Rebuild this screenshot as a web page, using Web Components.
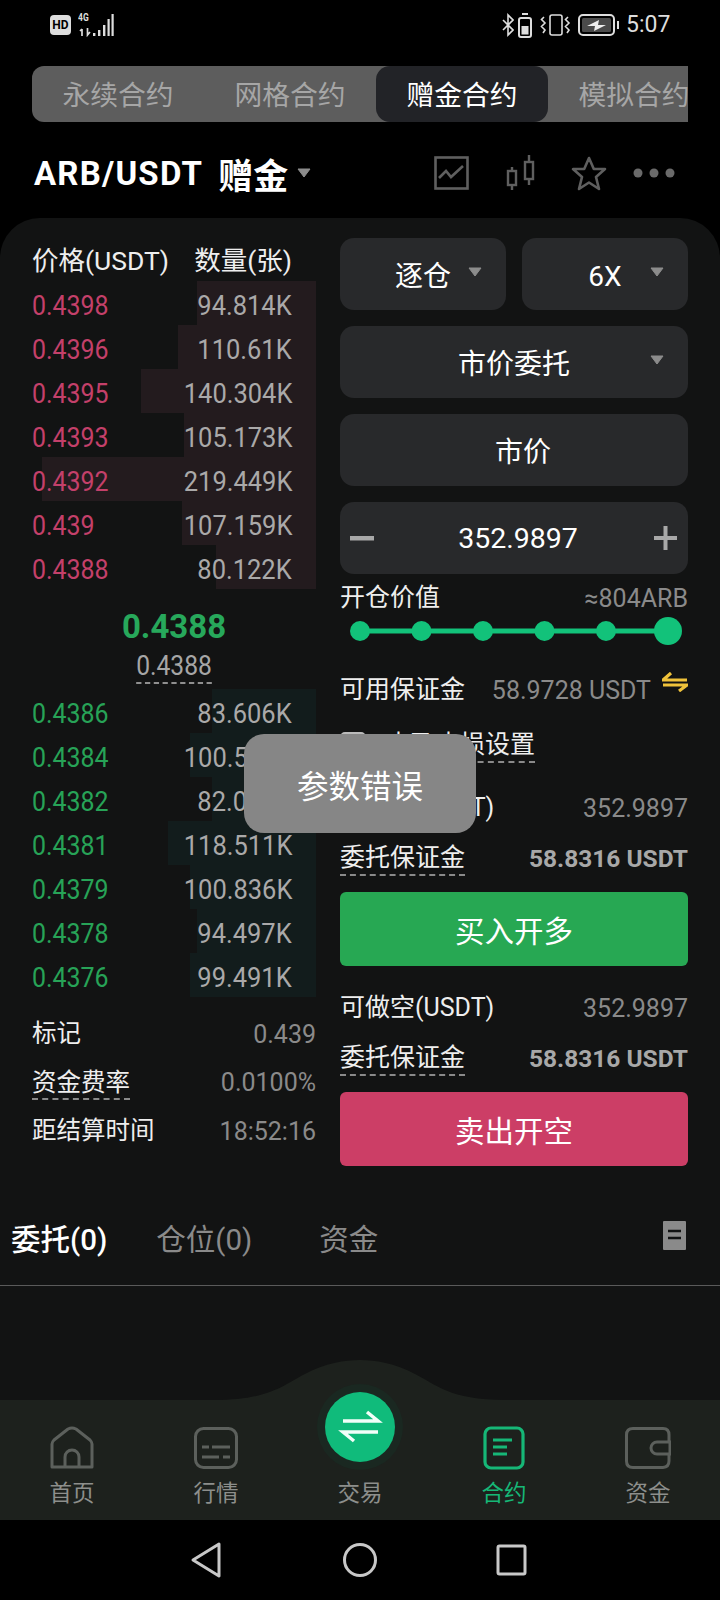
<!DOCTYPE html>
<html lang="zh">
<head>
<meta charset="utf-8">
<title>赠金合约</title>
<style>
  html, body { margin: 0; background: #000; }
  body {
    width: 720px;
    height: 1600px;
    overflow: hidden;
    color: #fff;
    font-family: Roboto, "Noto Sans CJK SC", sans-serif;
  }
  app-shell { display: flex; flex-direction: column; height: 1600px; }
  span[slot] { white-space: nowrap; }
</style>
</head>
<body>
<app-shell>
  <status-bar></status-bar>
  <segment-tabs active="2">
    <span>永续合约</span><span>网格合约</span><span>赠金合约</span><span>模拟合约</span>
  </segment-tabs>
  <pair-header>ARB/USDT</pair-header>
  <trade-panel>
    <order-book>
      <book-row side="ask" bar="119"><span slot="price">0.4398</span>94.814K</book-row>
      <book-row side="ask" bar="138"><span slot="price">0.4396</span>110.61K</book-row>
      <book-row side="ask" bar="175"><span slot="price">0.4395</span>140.304K</book-row>
      <book-row side="ask" bar="132"><span slot="price">0.4393</span>105.173K</book-row>
      <book-row side="ask" bar="274"><span slot="price">0.4392</span>219.449K</book-row>
      <book-row side="ask" bar="134"><span slot="price">0.439</span>107.159K</book-row>
      <book-row side="ask" bar="100"><span slot="price">0.4388</span>80.122K</book-row>
      <mid-price last="0.4388" mark="0.4388"></mid-price>
      <book-row side="bid" bar="104"><span slot="price">0.4386</span>83.606K</book-row>
      <book-row side="bid" bar="126"><span slot="price">0.4384</span>100.512K</book-row>
      <book-row side="bid" bar="104"><span slot="price">0.4382</span>82.056K</book-row>
      <book-row side="bid" bar="148"><span slot="price">0.4381</span>118.511K</book-row>
      <book-row side="bid" bar="126"><span slot="price">0.4379</span>100.836K</book-row>
      <book-row side="bid" bar="119"><span slot="price">0.4378</span>94.497K</book-row>
      <book-row side="bid" bar="126"><span slot="price">0.4376</span>99.491K</book-row>
      <book-stat slot="stats"><span slot="label">标记</span>0.439</book-stat>
      <book-stat slot="stats" dashed><span slot="label">资金费率</span>0.0100%</book-stat>
      <book-stat slot="stats"><span slot="label">距结算时间</span>18:52:16</book-stat>
    </order-book>
    <trade-form></trade-form>
  </trade-panel>
  <record-tabs></record-tabs>
  <div style="flex:1;background:#121313"></div>
  <bottom-nav></bottom-nav>
  <system-nav></system-nav>
</app-shell>
<toast-message>参数错误</toast-message>

<script>
const CARET = `<svg width="14" height="10" viewBox="0 0 14 10"><path d="M1 1h12L7 9z" fill="#8c8c8c" stroke="#8c8c8c" stroke-linejoin="round"/></svg>`;

class StatusBar extends HTMLElement {
    constructor() {
        super();
        this.attachShadow({ mode: 'open' });
        this.shadowRoot.innerHTML = `
          <style>
            :host { display: flex; align-items: center; justify-content: space-between; height: 50px; padding: 0 50px 10px; flex: none; color: #ddd; }
            .group { display: flex; align-items: center; }
            .hd { width: 21px; height: 20px; background: #ddd; color: #000; border-radius: 4px; font: 700 12px/20px Roboto, sans-serif; text-align: center; }
            .net { position: relative; width: 36px; height: 24px; margin-left: 7px; }
            .net span { position: absolute; left: 0; top: -1px; font: 700 10px/12px Roboto, sans-serif; transform: scaleX(.85); transform-origin: 0 0; }
            .net svg { position: absolute; left: 0; top: 0; }
            .time { font: 400 23px/26px Roboto, sans-serif; margin-left: 6px; width: 44px; white-space: nowrap; }
            svg { display: block; }
          </style>
          <div class="group">
            <span class="hd">HD</span>
            <div class="net"><span>4G</span>
              <svg width="36" height="24" viewBox="0 0 36 24" fill="#ddd">
                <path d="M4 23v-7M2 18l2-2M9.500 15v7l2.500-3" fill="none" stroke="#ddd" stroke-width="1.700"/>
                <rect x="15" y="20" width="2.400" height="3"/><rect x="20" y="17" width="2.400" height="6"/><rect x="25" y="12" width="2.400" height="11"/><rect x="29.500" y="6" width="2.200" height="17"/><rect x="33.500" y="1" width="2.200" height="22"/>
              </svg>
            </div>
          </div>
          <div class="group">
            <svg width="12" height="24" viewBox="0 0 12 24" fill="none" stroke="#ddd" stroke-width="1.6"><path d="M1 7l10 10-5 5V2l5 5L1 17"/></svg>
            <svg style="margin-left:4px" width="14" height="25" viewBox="0 0 14 25" fill="none"><path d="M4 1h6" stroke="#ddd" stroke-width="2"/><rect x="1" y="5" width="12" height="19" rx="2" stroke="#ddd" stroke-width="2"/><rect x="3.5" y="13" width="7" height="8.5" fill="#ddd"/></svg>
            <svg style="margin-left:8px" width="33" height="22" viewBox="0 0 33 22" fill="none" stroke="#ddd" stroke-width="1.6"><rect x="10" y="1" width="12" height="20" rx="2"/><path d="M4 3l-2.5 2.5L5 9 1.5 12.500 5 16l-2 3M28 3l-2.500 2.500L29 9l-3.500 3.500L29 16l-2 3"/></svg>
            <svg style="margin-left:5px" width="42" height="22" viewBox="0 0 42 22"><rect x="1" y="1" width="35" height="20" rx="4" fill="none" stroke="#ddd" stroke-width="2"/><rect x="4" y="4" width="29" height="14" rx="1.500" fill="#4a4a4a"/><path d="M9 12l12-6-1 5h8l-12 6 1-5z" fill="#eee"/><rect x="39" y="7" width="2" height="8" fill="#ddd"/></svg>
            <span class="time">5:07</span>
          </div>
        `;
    }
}

class SegmentTabs extends HTMLElement {
    connectedCallback() {
        const active = Number(this.getAttribute('active'));
        Array.from(this.children).forEach((tab, i) => {
            tab.style.cssText = 'flex:none;width:172px;height:56px;line-height:59px;text-align:center;border-radius:14px;'
                + (i === active ? 'background:#222327;color:#fff;' : 'color:#a6a6a6;');
        });
    }

    constructor() {
        super();
        this.attachShadow({ mode: 'open' });
        this.shadowRoot.innerHTML = `
          <style>
            :host { display: flex; flex: none; width: 656px; height: 56px; margin: 6px 32px 0; overflow: hidden; background: #5d5d5d; border-radius: 12px 0 0 12px; font-size: 27.750px; }
            ::slotted(*) { white-space: nowrap; }
          </style>
          <slot></slot>
        `;
    }
}

class PairHeader extends HTMLElement {
    constructor() {
        super();
        this.attachShadow({ mode: 'open' });
        this.shadowRoot.innerHTML = `
          <style>
            :host { display: flex; align-items: center; flex: none; height: 96px; padding: 6px 45px 0 34px; box-sizing: border-box; }
            .pair { font-size: 33px; font-weight: 700; letter-spacing: 1.200px; white-space: nowrap; }
            .tag { font-size: 35px; font-weight: 700; margin-left: 15px; white-space: nowrap; }
            .caret { margin-left: 9px; }
            .icons { display: flex; align-items: center; margin-left: auto; }
            svg { display: block; }
          </style>
          <span class="pair"><slot></slot></span>
          <span class="tag">赠金</span>
          <span class="caret">${CARET}</span>
          <div class="icons">
            <svg width="35" height="34" viewBox="0 0 35 34" fill="none" stroke="#5f5f5f" stroke-width="2.600"><rect x="1.500" y="1.500" width="32" height="31"/><path d="M5 22l7-7 5 6 12-11"/></svg>
            <svg style="margin-left:37px" width="30" height="36" viewBox="0 0 30 36" fill="none" stroke="#5f5f5f" stroke-width="2.400"><rect x="2" y="16" width="8" height="14"/><path d="M6 12v4M6 30v5"/><rect x="19" y="7" width="8" height="17"/><path d="M23 0v7M23 24v6"/></svg>
            <svg style="margin-left:35px" width="36" height="35" viewBox="0 0 36 35" fill="none" stroke="#5f5f5f" stroke-width="2.600" stroke-linejoin="round"><path d="M18 2l4.800 11H34l-9 8 3 12-10-6.500L8 33l3-12-9-8h11.200z"/></svg>
            <svg style="margin-left:26px" width="42" height="10" viewBox="0 0 42 10" fill="#6a6a6a"><circle cx="5" cy="5" r="4.500"/><circle cx="21" cy="5" r="4.500"/><circle cx="37" cy="5" r="4.500"/></svg>
          </div>
        `;
    }
}

class TradePanel extends HTMLElement {
    constructor() {
        super();
        this.attachShadow({ mode: 'open' });
        this.shadowRoot.innerHTML = `
          <style>
            :host { display: grid; grid-template-columns: 284px 348px; column-gap: 24px; flex: none; height: 974px; padding: 20px 32px 0 32px; box-sizing: border-box; background: #121313; border-radius: 40px 40px 0 0; }
          </style>
          <slot></slot>
        `;
    }
}

class OrderBook extends HTMLElement {
    constructor() {
        super();
        this.attachShadow({ mode: 'open' });
        this.shadowRoot.innerHTML = `
          <style>
            :host { display: block; min-width: 0; }
            .head { display: flex; justify-content: space-between; height: 40px; padding: 3px 24px 0 0; font-size: 26.500px; line-height: 40px; color: #eee; white-space: nowrap; }
            .stats { margin-top: 13px; }
          </style>
          <div class="head"><span>价格(USDT)</span><span>数量(张)</span></div>
          <slot></slot>
          <div class="stats"><slot name="stats"></slot></div>
        `;
    }
}

class BookRow extends HTMLElement {
    constructor() {
        super();
        this.attachShadow({ mode: 'open' });
        this.shadowRoot.innerHTML = `
          <style>
            :host { display: flex; align-items: center; justify-content: space-between; height: 44px; box-sizing: border-box; padding: 4px 24px 0 0; font-size: 28px; color: #aaa9a9; white-space: nowrap; }
            :host([side="ask"]) { --bar: #231b1e; --price: #c4406a; }
            :host([side="bid"]) { --bar: #121c1c; --price: #27a357; }
            span { display: inline-block; }
            .price { color: var(--price); transform: scaleX(.89); transform-origin: 0 50%; }
            .qty { transform: scaleX(.91); transform-origin: 100% 50%; }
          </style>
          <span class="price"><slot name="price"></slot></span>
          <span class="qty"><slot></slot></span>
        `;
    }

    connectedCallback() {
        const w = this.getAttribute('bar') + 'px';
        this.style.background = `linear-gradient(to left, var(--bar) ${w}, transparent ${w})`;
    }
}

class MidPrice extends HTMLElement {
    constructor() {
        super();
        this.attachShadow({ mode: 'open' });
        this.shadowRoot.innerHTML = `
          <style>
            :host { display: flex; flex-direction: column; align-items: center; height: 100px; box-sizing: border-box; padding: 16px 0 0 0; white-space: nowrap; }
            .last { font-size: 33px; font-weight: 700; line-height: 44px; color: #27a85b; }
            .mark { font-size: 28px; line-height: 32px; color: #a6a6a6; border-bottom: 2px dashed #8f8f8f; margin-top: 1px; transform: scaleX(.88); }
          </style>
          <span class="last">${this.getAttribute('last')}</span>
          <span class="mark">${this.getAttribute('mark')}</span>
        `;
    }
}

class BookStat extends HTMLElement {
    constructor() {
        super();
        this.attachShadow({ mode: 'open' });
        this.shadowRoot.innerHTML = `
          <style>
            :host { display: flex; align-items: center; justify-content: space-between; height: 48.500px; font-size: 25px; color: #8a8a8a; white-space: nowrap; }
            .label { color: #eee; font-size: 24.500px; line-height: 30px; }
            :host([dashed]) .label { border-bottom: 2px dashed #8a8a8a; margin-bottom: -2px; }
          </style>
          <span class="label"><slot name="label"></slot></span>
          <span><slot></slot></span>
        `;
    }
}

class FormSelect extends HTMLElement {
    constructor() {
        super();
        this.attachShadow({ mode: 'open' });
        this.shadowRoot.innerHTML = `
          <style>
            :host { display: grid; grid-template-columns: 1fr auto 1fr; align-items: center; height: 72px; padding: 0 24px; box-sizing: border-box; background: #28292b; border-radius: 14px; font-size: 28px; color: #fff; white-space: nowrap; }
            :host([plain]) { padding-left: 42px; }
            .caret { justify-self: end; margin-bottom: 4px; }
            svg { display: block; }
          </style>
          <span></span>
          <span><slot></slot></span>
          <span class="caret">${this.hasAttribute('plain') ? '' : CARET}</span>
        `;
    }
}

class FormStepper extends HTMLElement {
    constructor() {
        super();
        this.attachShadow({ mode: 'open' });
        this.shadowRoot.innerHTML = `
          <style>
            :host { display: flex; align-items: center; justify-content: space-between; height: 72px; padding: 0 10px; box-sizing: border-box; background: #28292b; border-radius: 14px; font-size: 28.500px; color: #fff; }
            span { margin-left: 8px; }
            svg { display: block; }
          </style>
          <svg width="24" height="24" viewBox="0 0 24 24"><rect y="10" width="24" height="4.500" fill="#a8a8a8"/></svg>
          <span><slot></slot></span>
          <svg width="24" height="24" viewBox="0 0 24 24" fill="#a8a8a8"><rect y="10" width="23" height="4"/><rect x="9.500" y="0" width="4" height="24"/></svg>
        `;
    }
}

class LeverageSlider extends HTMLElement {
    constructor() {
        super();
        this.attachShadow({ mode: 'open' });
        const dots = [0, 1, 2, 3, 4].map(i => `<circle cx="${20 + i * 61.500}" cy="14" r="10"/>`).join('');
        this.shadowRoot.innerHTML = `
          <style>
            :host { display: block; height: 28px; margin-top: 3px; }
            svg { display: block; }
          </style>
          <svg width="348" height="28" viewBox="0 0 348 28" fill="#12c27a"><rect x="20" y="11.500" width="308" height="5"/>${dots}<circle cx="328" cy="14" r="14"/></svg>
        `;
    }
}

class InfoRow extends HTMLElement {
    constructor() {
        super();
        this.attachShadow({ mode: 'open' });
        this.shadowRoot.innerHTML = `
          <style>
            :host { display: flex; align-items: center; justify-content: space-between; height: 32px; font-size: 25px; color: #8a8a8a; white-space: nowrap; }
            .label { color: #eee; line-height: 32px; }
            :host([dashed]) .label { border-bottom: 2px dashed #8a8a8a; margin-bottom: -2px; }
            :host([strong]) .value { font-weight: 700; font-size: 24.500px; color: #a8a8a8; }
          </style>
          <span class="label"><slot name="label"></slot></span>
          <span class="value"><slot></slot></span>
        `;
    }
}

class ActionButton extends HTMLElement {
    constructor() {
        super();
        this.attachShadow({ mode: 'open' });
        this.shadowRoot.innerHTML = `
          <style>
            :host { display: flex; align-items: center; justify-content: center; height: 74px; border-radius: 6px; font-size: 29.500px; color: #fff; white-space: nowrap; }
            :host([tone="buy"]) { background: #27a853; }
            :host([tone="sell"]) { background: #cc3e66; }
          </style>
          <slot></slot>
        `;
    }
}

class TradeForm extends HTMLElement {
    constructor() {
        super();
        this.attachShadow({ mode: 'open' });
        this.shadowRoot.innerHTML = `
          <style>
            :host { display: flex; flex-direction: column; min-width: 0; }
            .pair { display: grid; grid-template-columns: 1fr 1fr; gap: 16px; }
            .stack { margin-top: 16px; }
            .swap { display: flex; align-items: center; gap: 11px; }
            .swap svg { display: block; margin-top: -16px; }
            .check { display: flex; align-items: center; gap: 19px; height: 32px; margin-top: 23px; font-size: 25px; color: #eee; white-space: nowrap; }
            .box { width: 22px; height: 22px; border: 2px solid #bbb; border-radius: 5px; }
            .check span { border-bottom: 2px dashed #8a8a8a; margin-bottom: -2px; line-height: 32px; }
          </style>
          <div class="pair">
            <form-select>逐仓</form-select>
            <form-select><span style="display:block;margin-top:4px">6X</span></form-select>
          </div>
          <form-select class="stack">市价委托</form-select>
          <form-select class="stack" plain>市价</form-select>
          <form-stepper class="stack">352.9897</form-stepper>
          <info-row style="margin-top:8px"><span slot="label">开仓价值</span>≈804ARB</info-row>
          <leverage-slider></leverage-slider>
          <info-row style="margin-top:29px"><span slot="label">可用保证金</span>
            <span class="swap">58.9728 USDT
              <svg width="26" height="20" viewBox="0 0 26 20" fill="none" stroke="#efc23a" stroke-width="3.200"><path d="M9 1L1 8h24M1 13h24l-8 6"/></svg>
            </span>
          </info-row>
          <div class="check"><div class="box"></div><span>止盈止损设置</span></div>
          <info-row style="margin-top:31px"><span slot="label">可做多(USDT)</span>352.9897</info-row>
          <info-row style="margin-top:18px" dashed strong><span slot="label">委托保证金</span>58.8316 USDT</info-row>
          <action-button tone="buy" style="margin-top:18px">买入开多</action-button>
          <info-row style="margin-top:26px"><span slot="label">可做空(USDT)</span>352.9897</info-row>
          <info-row style="margin-top:18px" dashed strong><span slot="label">委托保证金</span>58.8316 USDT</info-row>
          <action-button tone="sell" style="margin-top:18px">卖出开空</action-button>
        `;
    }
}

class RecordTabs extends HTMLElement {
    constructor() {
        super();
        this.attachShadow({ mode: 'open' });
        this.shadowRoot.innerHTML = `
          <style>
            :host { display: flex; align-items: center; flex: none; height: 94px; padding: 0 34px 4px 11px; box-sizing: border-box; background: #121313; border-bottom: 1px solid #5a5a5a; font-size: 29.500px; color: #8a8a8a; white-space: nowrap; }
            .on { color: #fff; font-weight: 500; }
            .b { margin-left: 49px; }
            .c { margin-left: 67px; }
            svg { display: block; margin-left: auto; margin-top: -2px; }
          </style>
          <span class="on">委托(0)</span>
          <span class="b">仓位(0)</span>
          <span class="c">资金</span>
          <svg width="23" height="29" viewBox="0 0 23 29"><rect width="23" height="29" rx="1" fill="#8a8a8a"/><path d="M5 10h13M5 17h13" stroke="#121313" stroke-width="2.500"/></svg>
        `;
    }
}

class NavItem extends HTMLElement {
    constructor() {
        super();
        this.attachShadow({ mode: 'open' });
        this.shadowRoot.innerHTML = `
          <style>
            :host { display: flex; flex-direction: column; align-items: center; font-size: 22.500px; color: #8d8f8c; white-space: nowrap; }
            :host([active]) { color: #16b777; }
            .icon { height: 44px; display: flex; align-items: center; justify-content: center; }
            .label { line-height: 34px; margin-top: 6px; }
            ::slotted(svg) { display: block; }
          </style>
          <div class="icon"><slot name="icon"></slot></div>
          <span class="label"><slot></slot></span>
        `;
    }
}

class BottomNav extends HTMLElement {
    constructor() {
        super();
        this.attachShadow({ mode: 'open' });
        this.shadowRoot.innerHTML = `
          <style>
            :host { display: grid; grid-template-columns: repeat(5, 144px); flex: none; position: relative; height: 120px; padding-top: 26px; box-sizing: border-box; background: #1d211d; }
            .hump { position: absolute; left: 0; top: -40px; display: block; }
            .trade { position: absolute; left: 317px; top: -16px; display: block; }
          </style>
          <svg class="hump" width="720" height="41" viewBox="0 0 720 41" fill="#1d211d"><path d="M215 41V40C270 40 285 24 305 14C325 3 345 0 360 0C375 0 395 3 415 14C435 24 450 40 505 40V41Z"/></svg>
          <slot></slot>
          <svg class="trade" width="86" height="86" viewBox="0 0 86 86"><circle cx="43" cy="43" r="43" fill="#1a2821"/><circle cx="43" cy="43" r="35" fill="#10bb7b"/><path d="M26 37h35L50 28M61 48H26l11 9" fill="none" stroke="#f2fff9" stroke-width="3.500"/></svg>
        `;
    }
}

class SystemNav extends HTMLElement {
    constructor() {
        super();
        this.attachShadow({ mode: 'open' });
        this.shadowRoot.innerHTML = `
          <style>
            :host { display: flex; align-items: center; justify-content: center; flex: none; height: 80px; background: #000; }
            svg { display: block; margin-top: -1px; }
          </style>
          <svg width="720" height="40" viewBox="0 0 720 40" fill="none" stroke="#c8c8c8" stroke-width="3" stroke-linejoin="round"><path d="M219 4L193 20l26 16z"/><circle cx="360" cy="20" r="15.500"/><rect x="498" y="6" width="27" height="28" rx="1.500"/></svg>
        `;
    }
}

class ToastMessage extends HTMLElement {
    constructor() {
        super();
        this.attachShadow({ mode: 'open' });
        this.shadowRoot.innerHTML = `
          <style>
            :host { display: flex; align-items: center; justify-content: center; position: absolute; left: 244px; top: 734px; width: 232px; height: 99px; background: #868686; border-radius: 20px; font-size: 31.500px; color: #fff; white-space: nowrap; }
          </style>
          <slot></slot>
        `;
    }
}

window.customElements.define('app-shell', class extends HTMLElement {});
window.customElements.define('status-bar', StatusBar);
window.customElements.define('segment-tabs', SegmentTabs);
window.customElements.define('pair-header', PairHeader);
window.customElements.define('trade-panel', TradePanel);
window.customElements.define('order-book', OrderBook);
window.customElements.define('book-row', BookRow);
window.customElements.define('mid-price', MidPrice);
window.customElements.define('book-stat', BookStat);
window.customElements.define('form-select', FormSelect);
window.customElements.define('form-stepper', FormStepper);
window.customElements.define('leverage-slider', LeverageSlider);
window.customElements.define('info-row', InfoRow);
window.customElements.define('action-button', ActionButton);
window.customElements.define('trade-form', TradeForm);
window.customElements.define('record-tabs', RecordTabs);
window.customElements.define('nav-item', NavItem);
window.customElements.define('bottom-nav', BottomNav);
window.customElements.define('system-nav', SystemNav);
window.customElements.define('toast-message', ToastMessage);

// nav items are filled in here so the icon markup stays next to the bar
document.querySelector('bottom-nav').innerHTML = `
  <nav-item>
    <svg slot="icon" width="44" height="44" viewBox="0 0 44 44" fill="none" stroke="#5c605c" stroke-width="3" stroke-linejoin="round"><path d="M2 41V18q0-2 2-4L18 3q4-2 8 0l14 11q2 2 2 4v23zM15 41V31a7 7 0 0 1 14 0v10"/></svg>
    首页
  </nav-item>
  <nav-item>
    <svg slot="icon" width="44" height="42" viewBox="0 0 44 42" fill="none" stroke="#5c605c" stroke-width="3"><rect x="1.500" y="1.500" width="41" height="39" rx="8"/><path d="M8 20h7M18 20h18M8 30h17M29 30h7"/></svg>
    行情
  </nav-item>
  <nav-item>
    <svg slot="icon" width="0" height="0"></svg>
    交易
  </nav-item>
  <nav-item active>
    <svg slot="icon" width="42" height="44" viewBox="0 0 42 44" fill="none" stroke="#16b777" stroke-width="3.200"><rect x="2" y="2" width="38" height="40" rx="6"/><path d="M10 14h19M10 21h14M10 28h14"/></svg>
    合约
  </nav-item>
  <nav-item>
    <svg slot="icon" width="46" height="42" viewBox="0 0 46 42" fill="none" stroke="#5c605c" stroke-width="3"><path d="M44 14V8q0-6.500-6-6.500H8q-6.500 0-6.500 6.500v26q0 6.500 6.500 6.500h30q6-.5 6-6.500v-6"/><path d="M45 15H32a6 6 0 0 0 0 12h13z"/></svg>
    资金
  </nav-item>
`;
</script>
</body>
</html>
